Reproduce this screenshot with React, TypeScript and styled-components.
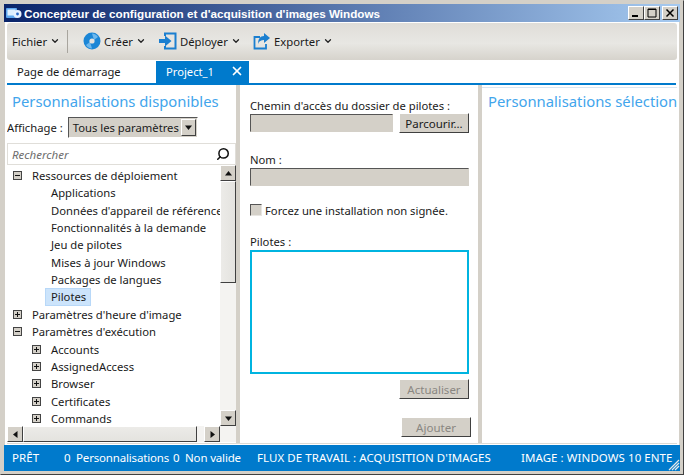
import styled, { createGlobalStyle } from 'styled-components';
import { Search, X, ChevronDown } from 'lucide-react';

const GlobalStyle = createGlobalStyle`
  html, body { margin: 0; padding: 0; background: #d4d0c8; }
  * { box-sizing: border-box; }
`;

const Win = styled.div`
  width: 684px;
  height: 475px;
  display: flex;
  flex-direction: column;
  background: #d4d0c8;
  padding: 3px 4px 3px;
  border: 1px solid #d4d0c8;
  border-right-color: #404040;
  border-bottom-color: #404040;
  font-family: "Noto Sans", sans-serif;
  font-size: 11.25px;
  color: #1a1a1a;
  overflow: hidden;
`;

const TitleBar = styled.div`
  height: 18px;
  flex: none;
  margin: 0 -1px;
  display: flex;
  align-items: center;
  padding: 0 2px;
  background: linear-gradient(90deg, #0a246a, #a6caf0);
  color: #fff;
  font-family: "Liberation Sans", sans-serif;
  font-weight: 700;
  font-size: 11.7px;
  gap: 2px;
`;

const TitleText = styled.span`
  flex: 1;
  white-space: nowrap;
`;

const CaptionGroup = styled.div`
  display: flex;
`;

const CaptionBtn = styled.div<{ $gap?: boolean }>`
  width: 16px;
  height: 14px;
  margin-left: ${p => (p.$gap ? '2px' : '0')};
  background: #d4d0c8;
  border: 1px solid;
  border-color: #fff #404040 #404040 #fff;
  display: flex;
  align-items: center;
  justify-content: center;
`;

const Body = styled.div`
  flex: 1;
  min-height: 0;
  display: flex;
  flex-direction: column;
  background: #fff;
`;

const Toolbar = styled.div`
  height: 37px;
  flex: none;
  margin: 1px 2px 0;
  display: flex;
  align-items: center;
  padding: 0 5px;
  border-radius: 3px;
  background: linear-gradient(180deg, #dfddd8 0%, #e8e7e3 55%, #d6d3cc 100%);
`;

const ToolItem = styled.div<{ $w: number }>`
  display: flex;
  align-items: center;
  gap: 3px;
  width: ${p => p.$w}px;
  font-size: 11.3px;
  white-space: nowrap;
  padding-bottom: 1px;
`;

const ToolDivider = styled.div`
  width: 1px;
  height: 23px;
  background: #a8a59e;
  margin: 0 15px 0 0;
`;

const TabRow = styled.div`
  height: 22px;
  flex: none;
  margin: 1px 2px 0;
  display: flex;
  align-items: stretch;
`;

const Tab = styled.div<{ $active?: boolean }>`
  display: flex;
  align-items: center;
  padding: 0 5px 2px 10px;
  font-size: 11.2px;
  width: ${p => (p.$active ? '93px' : '149px')};
  background: ${p => (p.$active ? '#007acc' : 'transparent')};
  color: ${p => (p.$active ? '#fff' : '#1a1a1a')};
  justify-content: space-between;
`;

const BlueLine = styled.div`
  height: 2px;
  flex: none;
  margin: 0 3px 0 2px;
  background: #007acc;
`;

const Panels = styled.div`
  flex: 1;
  min-height: 0;
  display: flex;
  margin: 0 2px;
  overflow: hidden;
  border-bottom: 1px solid #dcdad5;
`;

const LeftPane = styled.div`
  width: 229px;
  flex: none;
  display: flex;
  flex-direction: column;
  min-height: 0;
  padding-bottom: 1px;
`;

const Splitter = styled.div`
  width: 4px;
  flex: none;
  background: #d4d0c8;
`;

const PaneTitle = styled.div`
  font-size: 14.8px;
  color: #42a5ec;
  padding: 6px 0 0 5px;
  height: 30px;
  white-space: nowrap;
  overflow: hidden;
`;

const ViewRow = styled.div`
  display: flex;
  align-items: center;
  height: 22px;
  gap: 5px;
  margin-top: 1px;
`;

const Combo = styled.div`
  width: 130px;
  height: 21px;
  background: #d4d0c8;
  border: 1px solid;
  border-color: #555 #fff #fff #555;
  display: flex;
  align-items: center;
  justify-content: space-between;
  padding: 0 1px 0 4px;
`;

const ComboArrow = styled.div`
  width: 15px;
  height: 17px;
  background: #d4d0c8;
  border: 1px solid;
  border-color: #fff #404040 #404040 #fff;
  display: flex;
  align-items: center;
  justify-content: center;
`;

const SearchBox = styled.div`
  height: 22px;
  margin: 5px 0 0 0;
  border: 1px solid #e0ded9;
  display: flex;
  align-items: center;
  justify-content: space-between;
  padding: 0 5px 0 4px;
  font-style: italic;
  color: #6d6d6d;
  font-size: 11.5px;
`;

const TreeArea = styled.div`
  flex: 1;
  min-height: 0;
  display: grid;
  grid-template-columns: 1fr 16px;
  grid-template-rows: 1fr 16px;
`;

const TreeList = styled.div`
  overflow: hidden;
  padding-top: 1.6px;
  min-width: 0;
`;

const TreeRow = styled.div<{ $level: number }>`
  height: 17.4px;
  display: flex;
  align-items: center;
  padding-left: ${p => (p.$level === 0 ? 6 : 25)}px;
  white-space: nowrap;
`;

const Expander = styled.div`
  width: 9px;
  height: 9px;
  flex: none;
  border: 1px solid #444;
  background: #d4d0c8;
  position: relative;
  margin-right: 10px;
  &::before {
    content: '';
    position: absolute;
    left: 1px;
    right: 1px;
    top: 3px;
    height: 1px;
    background: #111;
  }
`;

const PlusExpander = styled(Expander)`
  &::after {
    content: '';
    position: absolute;
    top: 1px;
    bottom: 1px;
    left: 3px;
    width: 1px;
    background: #111;
  }
`;

const RowLabel = styled.span<{ $selected?: boolean }>`
  padding: ${p => (p.$selected ? '0 4px 1px 5px' : '0')};
  margin-left: ${p => (p.$selected ? '14px' : '19px')};
  background: ${p => (p.$selected ? '#cce4fb' : 'transparent')};
  outline: ${p => (p.$selected ? '1px solid #b8d8f8' : 'none')};
`;

const VScroll = styled.div`
  display: flex;
  flex-direction: column;
  background: #f4f3f1;
`;

const ScrollBtn = styled.div`
  width: 16px;
  height: 16px;
  flex: none;
  background: #d4d0c8;
  border: 1px solid;
  border-color: #fff #404040 #404040 #fff;
  display: flex;
  align-items: center;
  justify-content: center;
`;

const VThumb = styled.div`
  height: 102px;
  flex: none;
  background: linear-gradient(90deg, #ecebe8, #e4e3df);
  border: 1px solid;
  border-color: #fff #404040 #404040 #fff;
`;

const Spacer = styled.div`
  flex: 1;
`;

const HScroll = styled.div`
  display: flex;
  background: #f4f3f1;
`;

const HThumb = styled.div`
  width: 174px;
  flex: none;
  background: linear-gradient(180deg, #ecebe8, #e4e3df);
  border: 1px solid;
  border-color: #fff #404040 #404040 #fff;
`;

const Corner = styled.div`
  background: #f4f3f1;
`;

const MiddlePane = styled.div`
  width: 238px;
  flex: none;
  display: flex;
  flex-direction: column;
  padding: 13px 9px 0 10px;
`;

const FieldLabel = styled.div`
  height: 15px;
  line-height: 15px;
  white-space: nowrap;
`;

const InputRow = styled.div`
  display: flex;
  justify-content: space-between;
  height: 19px;
`;

const SunkenInput = styled.div<{ $w?: number }>`
  width: ${p => (p.$w ? `${p.$w}px` : '100%')};
  height: 18px;
  margin-top: 1px;
  background: #d4d0c8;
  border: 1px solid;
  border-color: #555 #d4d0c8 #d4d0c8 #555;
`;

const PushBtn = styled.div<{ $disabled?: boolean; $w: number }>`
  width: ${p => p.$w}px;
  height: 20px;
  background: #d4d0c8;
  border: 1px solid;
  border-color: #fff #404040 #404040 #fff;
  color: ${p => (p.$disabled ? '#8a8782' : '#1a1a1a')};
  display: flex;
  align-items: center;
  justify-content: center;
  font-size: 11.5px;
  flex: none;
`;

const NameBlock = styled.div`
  margin-top: 20px;
`;

const CheckRow = styled.div`
  display: flex;
  align-items: center;
  gap: 3px;
  margin-top: 16px;
  height: 16px;
`;

const CheckBox = styled.div`
  width: 12px;
  height: 12px;
  flex: none;
  background: #d4d0c8;
  border: 1px solid;
  border-color: #555 #e8e6e2 #e8e6e2 #555;
`;

const DriversBlock = styled.div`
  margin-top: 16px;
`;

const DriverList = styled.div`
  height: 124px;
  margin-top: 1px;
  border: 2px solid #00b4e0;
`;

const BtnRight = styled.div<{ $top: number; $shift?: number }>`
  display: flex;
  justify-content: flex-end;
  margin-top: ${p => p.$top}px;
  margin-right: ${p => p.$shift ?? 0}px;
`;

const RightPane = styled.div`
  flex: 1;
  min-width: 0;
  border-top: 1px solid #d9e6f2;
  margin-top: 2px;
`;

const RightTitle = styled(PaneTitle)`
  padding: 3px 0 0 6px;
`;

const StatusBar = styled.div`
  height: 26px;
  flex: none;
  margin: 1px -1px 0;
  padding: 0 0 2px 8px;
  background: #007acc;
  color: #fff;
  display: flex;
  align-items: center;
  font-size: 11.5px;
  white-space: nowrap;
  position: relative;
  overflow: hidden;
`;

const StatusCell = styled.span<{ $w: number; $tight?: boolean }>`
  width: ${p => p.$w}px;
  flex: none;
  overflow: hidden;
  letter-spacing: ${p => (p.$tight ? '-0.17px' : '0.07px')};
`;

const Grip = styled.svg`
  position: absolute;
  right: 0;
  bottom: 0;
`;

const ArrowSvg = ({ d }: { d: string }) => (
  <svg width="9" height="9" viewBox="0 0 9 9"><path d={d} fill="#111" /></svg>
);

const DiscIcon = () => (
  <svg width="18" height="18" viewBox="0 0 18 18">
    <circle cx="9" cy="9" r="8.5" fill="#1b86d6" />
    <path d="M9 1.5A7.5 7.5 0 0 1 15 5L11 8Z" fill="#6db8ee" />
    <path d="M9 16.5A7.5 7.5 0 0 1 3 13L7 10Z" fill="#6db8ee" />
    <circle cx="9" cy="9" r="2.6" fill="#e4e2de" />
  </svg>
);

const DeployIcon = () => (
  <svg width="18" height="18" viewBox="0 0 18 18" fill="none">
    <path d="M6 4V1.5H16.5V16.5H6V14" stroke="#1b7fd0" strokeWidth="2" />
    <path d="M0 7h6V3.5L12.5 9 6 14.5V11H0Z" fill="#1b7fd0" />
  </svg>
);

const ExportIcon = () => (
  <svg width="18" height="18" viewBox="0 0 18 18" fill="none">
    <path d="M7 5H1.5V16.5H13V12" stroke="#1b7fd0" strokeWidth="1.8" />
    <path d="M11 1l6 5-6 5V8C8 8 6 9 5 12 5 7 7 4 11 4Z" fill="#1b7fd0" />
  </svg>
);

const WinIcon = () => (
  <svg width="16" height="13" viewBox="0 0 16 13">
    <rect x="0" y="1" width="11" height="10" rx="1" fill="#5fa8f0" />
    <rect x="1.5" y="2.5" width="8" height="6" fill="#dff0ff" />
    <circle cx="11.5" cy="7" r="4" fill="#e8f2ff" />
    <circle cx="11.5" cy="7" r="1.4" fill="#2a68c8" />
  </svg>
);

const Chevron = () => <ChevronDown size={10} strokeWidth={3} color="#222" />;

const resources = [
  'Applications',
  "Données d'appareil de référence",
  'Fonctionnalités à la demande',
  'Jeu de pilotes',
  'Mises à jour Windows',
  'Packages de langues',
];

const settings = ['Accounts', 'AssignedAccess', 'Browser', 'Certificates', 'Commands'];

export default function App() {
  return (
    <>
      <GlobalStyle />
      <Win>
        <TitleBar>
          <WinIcon />
          <TitleText>Concepteur de configuration et d'acquisition d'images Windows</TitleText>
          <CaptionGroup>
            <CaptionBtn>
              <svg width="10" height="10" viewBox="0 0 10 10"><rect x="1" y="7" width="6" height="2" fill="#000" /></svg>
            </CaptionBtn>
            <CaptionBtn>
              <svg width="10" height="10" viewBox="0 0 10 10"><path d="M1 1h8v8H1Z M1 1.5h8" fill="none" stroke="#000" /></svg>
            </CaptionBtn>
            <CaptionBtn $gap>
              <svg width="10" height="10" viewBox="0 0 10 10"><path d="M1.5 1.5l7 7M8.5 1.5l-7 7" stroke="#000" strokeWidth="1.5" /></svg>
            </CaptionBtn>
          </CaptionGroup>
        </TitleBar>
        <Body>
          <Toolbar>
            <ToolItem $w={55}>Fichier <Chevron /></ToolItem>
            <ToolDivider />
            <ToolItem $w={76}><DiscIcon /><span>Créer</span><Chevron /></ToolItem>
            <ToolItem $w={94}><DeployIcon /><span>Déployer</span><Chevron /></ToolItem>
            <ToolItem $w={90}><ExportIcon /><span>Exporter</span><Chevron /></ToolItem>
          </Toolbar>
          <TabRow>
            <Tab>Page de démarrage</Tab>
            <Tab $active>
              Project_1
              <X size={14} strokeWidth={3} color="#fff" />
            </Tab>
          </TabRow>
          <BlueLine />
          <Panels>
            <LeftPane>
              <PaneTitle>Personnalisations disponibles</PaneTitle>
              <ViewRow>
                Affichage :
                <Combo>
                  Tous les paramètres
                  <ComboArrow><ArrowSvg d="M1 2.5h7L4.5 7Z" /></ComboArrow>
                </Combo>
              </ViewRow>
              <SearchBox>
                Rechercher
                <Search size={14} strokeWidth={2.6} color="#111" style={{ transform: 'scaleX(-1)' }} />
              </SearchBox>
              <TreeArea>
                <TreeList>
                  <TreeRow $level={0}><Expander />Ressources de déploiement</TreeRow>
                  {resources.map(name => (
                    <TreeRow key={name} $level={1}><RowLabel>{name}</RowLabel></TreeRow>
                  ))}
                  <TreeRow $level={1}><RowLabel $selected>Pilotes</RowLabel></TreeRow>
                  <TreeRow $level={0}><PlusExpander />Paramètres d'heure d'image</TreeRow>
                  <TreeRow $level={0}><Expander />Paramètres d'exécution</TreeRow>
                  {settings.map(name => (
                    <TreeRow key={name} $level={1}><PlusExpander />{name}</TreeRow>
                  ))}
                </TreeList>
                <VScroll>
                  <ScrollBtn><ArrowSvg d="M4.5 2L8 6.5H1Z" /></ScrollBtn>
                  <VThumb />
                  <Spacer />
                  <ScrollBtn><ArrowSvg d="M1 2.5h7L4.5 7Z" /></ScrollBtn>
                </VScroll>
                <HScroll>
                  <ScrollBtn><ArrowSvg d="M2 4.5L6.5 1V8Z" /></ScrollBtn>
                  <HThumb />
                  <Spacer />
                  <ScrollBtn><ArrowSvg d="M7 4.5L2.5 1V8Z" /></ScrollBtn>
                </HScroll>
                <Corner />
              </TreeArea>
            </LeftPane>
            <Splitter />
            <MiddlePane>
              <FieldLabel>Chemin d'accès du dossier de pilotes :</FieldLabel>
              <InputRow>
                <SunkenInput $w={143} />
                <PushBtn $w={70}>Parcourir...</PushBtn>
              </InputRow>
              <NameBlock>
                <FieldLabel>Nom :</FieldLabel>
                <SunkenInput />
              </NameBlock>
              <CheckRow>
                <CheckBox />
                Forcez une installation non signée.
              </CheckRow>
              <DriversBlock>
                <FieldLabel>Pilotes :</FieldLabel>
                <DriverList />
              </DriversBlock>
              <BtnRight $top={5}><PushBtn $w={70} $disabled>Actualiser</PushBtn></BtnRight>
              <BtnRight $top={18} $shift={-2}><PushBtn $w={70} $disabled>Ajouter</PushBtn></BtnRight>
            </MiddlePane>
            <Splitter />
            <RightPane>
              <RightTitle>Personnalisations sélection</RightTitle>
            </RightPane>
          </Panels>
          <StatusBar>
            <StatusCell $w={52}>PRÊT</StatusCell>
            <StatusCell $w={109} $tight>0 &nbsp;Personnalisations</StatusCell>
            <StatusCell $w={84} $tight>0 &nbsp;Non valide</StatusCell>
            <StatusCell $w={264}>FLUX DE TRAVAIL : ACQUISITION D'IMAGES</StatusCell>
            <StatusCell $w={159}>IMAGE : WINDOWS 10 ENTE</StatusCell>
            <Grip width="13" height="13" viewBox="0 0 13 13">
              <path d="M12 2L2 12M12 5L5 12M12 8L8 12" stroke="#e8e8e8" strokeWidth="1.2" />
            </Grip>
          </StatusBar>
        </Body>
      </Win>
    </>
  );
}
